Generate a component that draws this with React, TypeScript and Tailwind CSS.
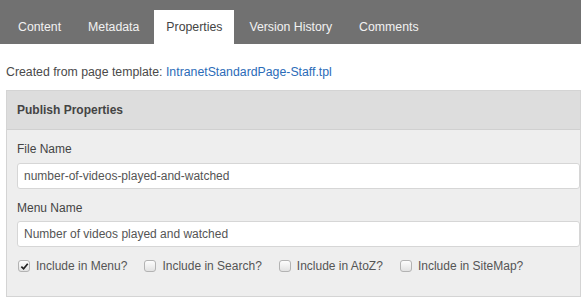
import { useState } from "react";

const tabs = ["Content", "Metadata", "Properties", "Version History", "Comments"];

const initialFlags = [
  { label: "Include in Menu?", checked: true },
  { label: "Include in Search?", checked: false },
  { label: "Include in AtoZ?", checked: false },
  { label: "Include in SiteMap?", checked: false },
];

function Check({ checked, onToggle }: { checked: boolean; onToggle: () => void }) {
  return (
    <span
      onClick={onToggle}
      className="w-[12px] h-[12px] mr-[6px] rounded-[3px] border border-[#b3b3b3] bg-gradient-to-b from-[#fdfdfd] to-[#e2e2e2] flex items-center justify-center"
    >
      {checked && (
        <svg viewBox="0 0 10 10" className="w-[9px] h-[9px]">
          <path d="M1.5 5.2 L4 7.6 L8.6 2" fill="none" stroke="#222" strokeWidth="1.9" />
        </svg>
      )}
    </span>
  );
}

export default function App() {
  const [active, setActive] = useState("Properties");
  const [fileName, setFileName] = useState("number-of-videos-played-and-watched");
  const [menuName, setMenuName] = useState("Number of videos played and watched");
  const [flags, setFlags] = useState(initialFlags);

  return (
    <div className="w-[581px] h-[299px] overflow-hidden bg-white text-[12.3px] text-[#444] font-['Liberation_Sans',Arial,sans-serif]">
      {/* Tabs */}
      <div className="h-[44px] bg-[#717171] flex items-end gap-[3px] pl-[6px]">
        {tabs.map((tab) => (
          <button
            key={tab}
            onClick={() => setActive(tab)}
            className={`h-[34px] px-3 leading-[34px] ${
              active === tab ? "bg-white text-[#444]" : "text-[#f2f2f2]"
            }`}
          >
            {tab}
          </button>
        ))}
      </div>

      <p className="mt-[20px] ml-[6px] leading-[16px] text-[#4a4a4a]">
        Created from page template: <a className="text-[#2b6cb8]">IntranetStandardPage-Staff.tpl</a>
      </p>

      {/* Publish Properties panel */}
      <div className="mt-[10px] ml-[6px] w-[575px] border border-[#d4d4d4]">
        <div className="h-[39px] bg-[#dddddd] border-b border-[#d0d0d0] pl-[10px] flex items-center font-bold text-[12px] text-[#444]">
          Publish Properties
        </div>
        <div className="bg-[#eeeeee] pl-[10px] pt-[11px] pb-[22px] text-[12px]">
          <label className="block leading-[16px]">File Name</label>
          <input
            value={fileName}
            onChange={(e) => setFileName(e.target.value)}
            className="mt-[6px] w-full h-[26px] bg-white border border-[#d6d6d6] rounded-[3px] px-[6px] text-[#555] outline-none"
          />
          <label className="block mt-[11px] leading-[16px]">Menu Name</label>
          <input
            value={menuName}
            onChange={(e) => setMenuName(e.target.value)}
            className="mt-[5px] w-full h-[26px] bg-white border border-[#d6d6d6] rounded-[3px] px-[6px] text-[#555] outline-none"
          />
          <div className="mt-[11px] flex items-center leading-[16px] pl-[1px]">
            {flags.map((f, i) => (
              <label key={f.label} className="flex items-center mr-[17px] text-[#555]">
                <Check
                  checked={f.checked}
                  onToggle={() =>
                    setFlags(flags.map((x, j) => (j === i ? { ...x, checked: !x.checked } : x)))
                  }
                />
                {f.label}
              </label>
            ))}
          </div>
        </div>
      </div>
    </div>
  );
}
